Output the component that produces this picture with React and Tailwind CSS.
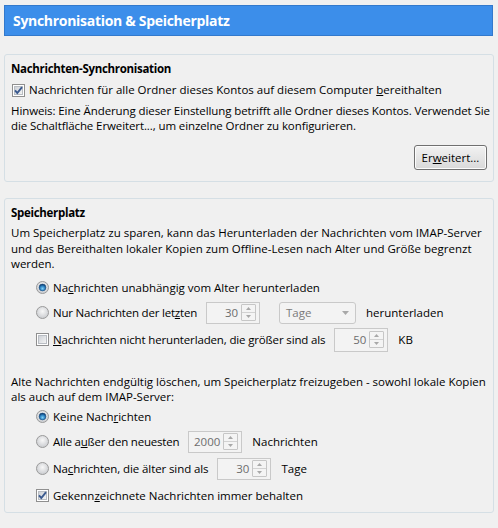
import React from "react";

const FONT = { fontFamily: '"Open Sans", "Noto Sans", sans-serif' };

function Check({ checked }) {
  return (
    <svg width="13" height="13" viewBox="0 0 13 13" className="shrink-0">
      <defs>
        <linearGradient id="cbg" x1="0" y1="0" x2="1" y2="1">
          <stop offset="0" stopColor="#cbcfd5" />
          <stop offset="1" stopColor="#f6f6f6" />
        </linearGradient>
      </defs>
      <rect x="0.5" y="0.5" width="12" height="12" fill="#fff" stroke="#8f8f8f" />
      <rect x="2.5" y="2.5" width="8" height="8" fill="url(#cbg)" stroke="#b9bdc3" />
      {checked && (
        <path d="M3 6.4 L5.3 9 L10 3.2" fill="none" stroke="#3b5a8f" strokeWidth="1.9" />
      )}
    </svg>
  );
}

function Radio({ checked }) {
  return (
    <svg width="13" height="13" viewBox="0 0 13 13" className="shrink-0">
      <defs>
        <radialGradient id="rbg" cx="0.5" cy="0.4" r="0.6">
          <stop offset="0" stopColor="#f8f8f8" />
          <stop offset="1" stopColor="#c9cbcf" />
        </radialGradient>
        <radialGradient id="rdot" cx="0.5" cy="0.65" r="0.6">
          <stop offset="0" stopColor="#7fd0f5" />
          <stop offset="0.6" stopColor="#2a7fc0" />
          <stop offset="1" stopColor="#0c3a6e" />
        </radialGradient>
      </defs>
      <circle cx="6.5" cy="6.5" r="6" fill="url(#rbg)" stroke="#9a9a9a" />
      {checked && <circle cx="6.5" cy="6.5" r="3.4" fill="url(#rdot)" stroke="#1b4d80" strokeWidth="0.6" />}
    </svg>
  );
}

function Spin({ value, h = "h-[22px]" }) {
  return (
    <div className={`w-[54px] ${h} flex items-center justify-end border border-[#c9c9c9] bg-[#f3f3f3] pr-[3px] gap-[3px]`}>
      <span className="text-[#6d6d6d]">{value}</span>
      <div className="w-[15px] h-[17px] flex flex-col border border-[#c6c6c6] rounded-[1px] bg-[#f4f4f4]">
        <div className="flex-1 flex items-center justify-center border-b border-[#d2d2d2]">
          <svg width="5" height="3" viewBox="0 0 5 3"><path d="M0 3 L2.5 0 L5 3 Z" fill="#a8a8a8" /></svg>
        </div>
        <div className="flex-1 flex items-center justify-center">
          <svg width="5" height="3" viewBox="0 0 5 3"><path d="M0 0 L2.5 3 L5 0 Z" fill="#a8a8a8" /></svg>
        </div>
      </div>
    </div>
  );
}

function Row({ children, className = "" }) {
  return <div className={`flex items-center whitespace-nowrap ${className}`}>{children}</div>;
}

export default function App() {
  return (
    <div style={FONT} className="w-[498px] h-[528px] bg-[#f0f0f0] text-[11.5px] text-black overflow-hidden pt-[5px] pl-[4px]">
      <div className="w-[489px] h-[31px] bg-[#3c8eea] border border-[#3279cc] flex items-center pl-[8px]">
        <span className="text-white font-bold text-[14px] tracking-[-0.3px]">Synchronisation &amp; Speicherplatz</span>
      </div>

      {/* Nachrichten-Synchronisation */}
      <div className="mt-[18px] w-[490px] border border-[#d5dfe5] rounded-[3px] pl-[6px] pr-[6px] pt-[6px] pb-[11px]">
        <div className="font-bold h-[16px] leading-[16px] tracking-[-0.3px]">Nachrichten-Synchronisation</div>
        <Row className="mt-[4px] h-[18px] gap-[4px] pl-[1px]">
          <Check checked />
          <span>
            Nachrichten für alle Ordner dieses Kontos auf diesem Computer <u>b</u>ereithalten
          </span>
        </Row>
        <p className="mt-[4px] leading-[15px] whitespace-nowrap tracking-[-0.1px]">
          Hinweis: Eine Änderung dieser Einstellung betrifft alle Ordner dieses Kontos. Verwendet Sie
          <br />
          die Schaltfläche Erweitert..., um einzelne Ordner zu konfigurieren.
        </p>
        <div className="mt-[12px] flex justify-end">
          <button className="w-[73px] h-[25px] border border-[#707070] rounded-[3px] bg-gradient-to-b from-[#f2f2f2] to-[#d9d9d9] shadow-[inset_0_0_0_1px_#fcfcfc]">
            Er<u>w</u>eitert...
          </button>
        </div>
      </div>

      {/* Speicherplatz */}
      <div className="mt-[16px] w-[490px] border border-[#d5dfe5] rounded-[3px] pl-[6px] pr-[6px] pt-[6px] pb-[5px]">
        <div className="font-bold h-[16px] leading-[16px] tracking-[-0.3px]">Speicherplatz</div>
        <p className="mt-[4px] leading-[15.5px] whitespace-nowrap">
          Um Speicherplatz zu sparen, kann das Herunterladen der Nachrichten vom IMAP-Server
          <br />
          und das Bereithalten lokaler Kopien zum Offline-Lesen nach Alter und Größe begrenzt
          <br />
          werden.
        </p>
        <div className="pl-[25px]">
          <Row className="mt-[4px] h-[24px] gap-[4px]">
            <Radio checked />
            <span>Na<u>c</u>hrichten unabhängig vom Alter herunterladen</span>
          </Row>
          <Row className="mt-[1px] h-[24px]">
            <Radio />
            <span className="ml-[4px] tracking-[-0.2px]">Nur Nachrichten der let<u>z</u>ten</span>
            <div className="ml-[9px]">
              <Spin value="30" />
            </div>
            <div className="ml-[19px] w-[77px] h-[22px] border border-[#c9c9c9] rounded-[3px] bg-[#f3f3f3] flex items-center justify-between pl-[6px] pr-[6px]">
              <span className="text-[#7a7a7a]">Tage</span>
              <svg width="7" height="4" viewBox="0 0 7 4"><path d="M0 0 L3.5 4 L7 0 Z" fill="#a8a8a8" /></svg>
            </div>
            <span className="ml-[10px]">herunterladen</span>
          </Row>
          <Row className="mt-[3px] h-[24px]">
            <Check />
            <span className="ml-[4px] tracking-[-0.15px]"><u>N</u>achrichten nicht herunterladen, die größer sind als</span>
            <div className="ml-[9px]">
              <Spin value="50" h="h-[24px]" />
            </div>
            <span className="ml-[10px]">KB</span>
          </Row>
        </div>

        <p className="mt-[22px] leading-[15px] whitespace-nowrap">
          Alte Nachrichten endgültig löschen, um Speicherplatz freizugeben - sowohl lokale Kopien
          <br />
          als auch auf dem IMAP-Server:
        </p>
        <div className="pl-[25px]">
          <Row className="mt-[2px] h-[22px] gap-[4px]">
            <Radio checked />
            <span>Keine Nach<u>r</u>ichten</span>
          </Row>
          <Row className="mt-[3px] h-[22px]">
            <Radio />
            <span className="ml-[4px] tracking-[-0.2px]">Alle a<u>u</u>ßer den neuesten</span>
            <div className="ml-[9px]">
              <Spin value="2000" />
            </div>
            <span className="ml-[10px]">Nachrichten</span>
          </Row>
          <Row className="mt-[5px] h-[22px]">
            <Radio />
            <span className="ml-[4px] tracking-[-0.1px]">Na<u>c</u>hrichten, die älter sind als</span>
            <div className="ml-[9px]">
              <Spin value="30" />
            </div>
            <span className="ml-[10px]">Tage</span>
          </Row>
          <Row className="mt-[5px] h-[22px] gap-[4px]">
            <Check checked />
            <span>Gekenn<u>z</u>eichnete Nachrichten immer behalten</span>
          </Row>
        </div>
      </div>
    </div>
  );
}
